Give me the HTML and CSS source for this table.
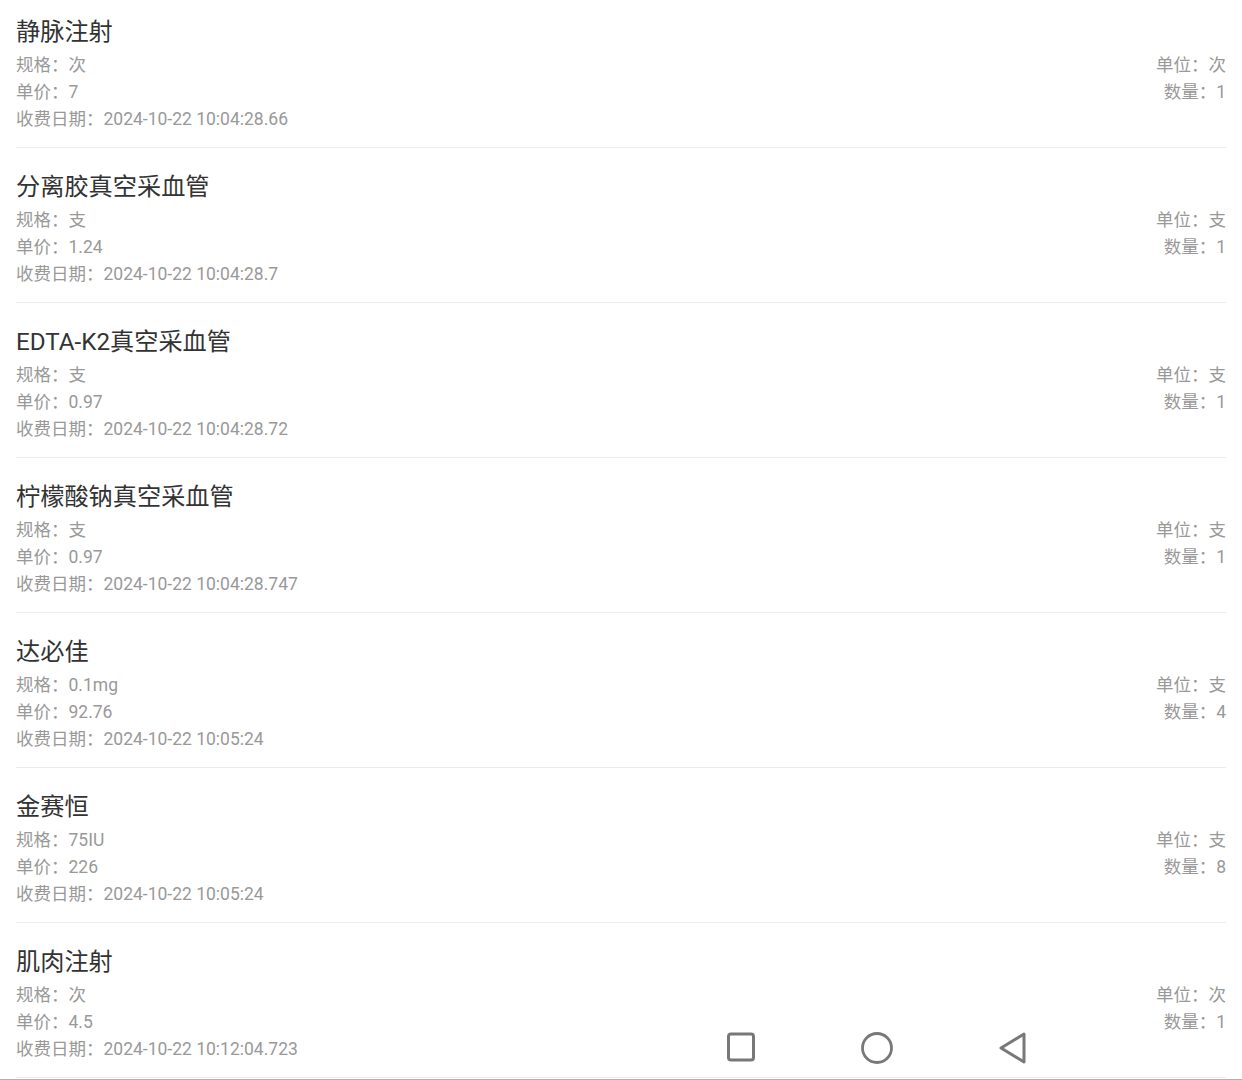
FILE: index.html
```html
<!DOCTYPE html>
<html lang="zh-CN">
<head>
    <meta charset="UTF-8">
    <meta name="viewport" content="width=device-width, initial-scale=1.0">
    <title>收费明细</title>
    <link rel="stylesheet" href="styles.css">
</head>
<body>
    <div class="fee-list">
        <!-- 收费项目 -->
        <div class="fee-item">
            <div class="fee-name">静脉注射</div>
            <div class="fee-body">
                <div class="fee-info">
                    <p>规格：次</p>
                    <p>单价：7</p>
                    <p>收费日期：2024-10-22 10:04:28.66</p>
                </div>
                <div class="fee-count">
                    <p>单位：次</p>
                    <p>数量：1</p>
                </div>
            </div>
        </div>

        <div class="fee-item">
            <div class="fee-name">分离胶真空采血管</div>
            <div class="fee-body">
                <div class="fee-info">
                    <p>规格：支</p>
                    <p>单价：1.24</p>
                    <p>收费日期：2024-10-22 10:04:28.7</p>
                </div>
                <div class="fee-count">
                    <p>单位：支</p>
                    <p>数量：1</p>
                </div>
            </div>
        </div>

        <div class="fee-item">
            <div class="fee-name">EDTA-K2真空采血管</div>
            <div class="fee-body">
                <div class="fee-info">
                    <p>规格：支</p>
                    <p>单价：0.97</p>
                    <p>收费日期：2024-10-22 10:04:28.72</p>
                </div>
                <div class="fee-count">
                    <p>单位：支</p>
                    <p>数量：1</p>
                </div>
            </div>
        </div>

        <div class="fee-item">
            <div class="fee-name">柠檬酸钠真空采血管</div>
            <div class="fee-body">
                <div class="fee-info">
                    <p>规格：支</p>
                    <p>单价：0.97</p>
                    <p>收费日期：2024-10-22 10:04:28.747</p>
                </div>
                <div class="fee-count">
                    <p>单位：支</p>
                    <p>数量：1</p>
                </div>
            </div>
        </div>

        <div class="fee-item">
            <div class="fee-name">达必佳</div>
            <div class="fee-body">
                <div class="fee-info">
                    <p>规格：0.1mg</p>
                    <p>单价：92.76</p>
                    <p>收费日期：2024-10-22 10:05:24</p>
                </div>
                <div class="fee-count">
                    <p>单位：支</p>
                    <p>数量：4</p>
                </div>
            </div>
        </div>

        <div class="fee-item">
            <div class="fee-name">金赛恒</div>
            <div class="fee-body">
                <div class="fee-info">
                    <p>规格：75IU</p>
                    <p>单价：226</p>
                    <p>收费日期：2024-10-22 10:05:24</p>
                </div>
                <div class="fee-count">
                    <p>单位：支</p>
                    <p>数量：8</p>
                </div>
            </div>
        </div>

        <div class="fee-item">
            <div class="fee-name">肌肉注射</div>
            <div class="fee-body">
                <div class="fee-info">
                    <p>规格：次</p>
                    <p>单价：4.5</p>
                    <p>收费日期：2024-10-22 10:12:04.723</p>
                </div>
                <div class="fee-count">
                    <p>单位：次</p>
                    <p>数量：1</p>
                </div>
            </div>
        </div>
    </div>

    <!-- 系统导航栏 -->
    <div class="nav-bar">
        <div class="nav-keys">
            <span class="nav-key">
                <svg width="30" height="32" viewBox="0 0 30 32"><rect x="2.5" y="3" width="25" height="26" rx="2.5" fill="none" stroke="#787878" stroke-width="3"/></svg>
            </span>
            <span class="nav-key">
                <svg width="34" height="34" viewBox="0 0 34 34"><circle cx="17" cy="17" r="14.5" fill="none" stroke="#787878" stroke-width="2.8"/></svg>
            </span>
            <span class="nav-key">
                <svg width="32" height="34" viewBox="0 0 32 34"><path d="M27 3 L4 17 L27 31 Z" fill="none" stroke="#787878" stroke-width="3" stroke-linejoin="round"/></svg>
            </span>
        </div>
    </div>
</body>
</html>
```

FILE: styles.css
```css
body {
    font-family: Roboto, "Noto Sans CJK SC", sans-serif;
    background-color: #fff;
    color: #333;
    margin: 0;
    padding: 0;
    overflow: hidden;
}

p {
    margin: 0;
}

.fee-list {
    margin-top: -7px;
}

.fee-item {
    margin: 0 16px;
    padding: 21px 0 14px;
    border-bottom: 1px solid #ececec;
}

.fee-name {
    font-size: 24.2px;
    line-height: 36px;
    color: #333;
    margin-bottom: 2px;
}

.fee-body {
    display: flex;
    justify-content: space-between;
    align-items: flex-start;
}

.fee-info p,
.fee-count p {
    font-size: 17.5px;
    line-height: 27px;
    color: #999;
}

.fee-count {
    text-align: right;
}

.nav-bar {
    position: fixed;
    left: 0;
    right: 0;
    bottom: 0;
    height: 62px;
    border-bottom: 1px solid #b0b0b0;
}

.nav-keys {
    display: flex;
    margin-left: 673px;
    margin-top: 14px;
}

.nav-key {
    display: flex;
    justify-content: center;
    width: 136px;
}
```
